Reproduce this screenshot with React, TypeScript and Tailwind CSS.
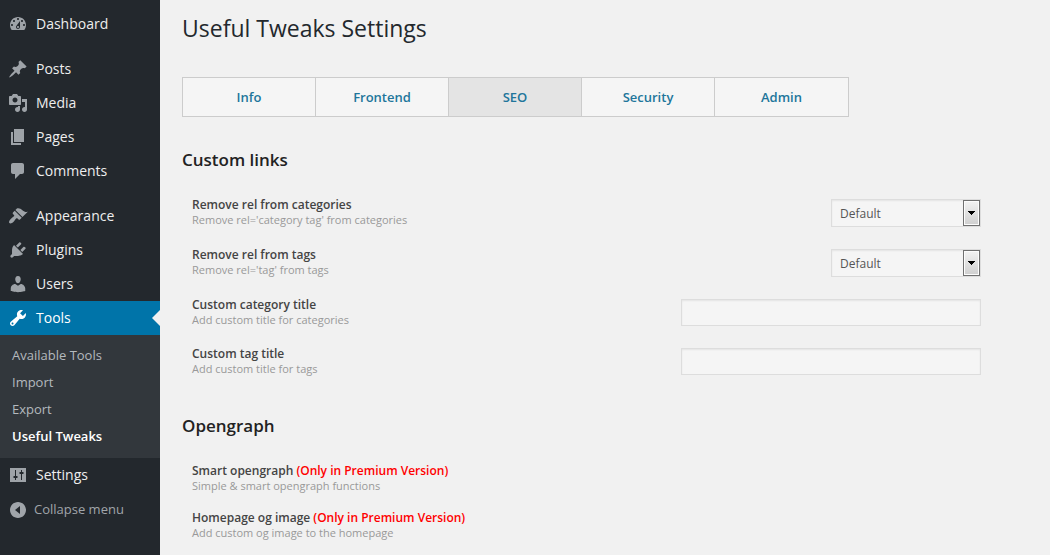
import { useState } from "react";

const ICONS = {
  dashboard:
    "M3.76 16h12.48c1.1-1.37 1.76-3.11 1.76-5 0-4.42-3.58-8-8-8s-8 3.58-8 8c0 1.89.66 3.63 1.76 5zM10 4c.55 0 1 .45 1 1s-.45 1-1 1-1-.45-1-1 .45-1 1-1zM6 6c.55 0 1 .45 1 1s-.45 1-1 1-1-.45-1-1 .45-1 1-1zm8 0c.55 0 1 .45 1 1s-.45 1-1 1-1-.45-1-1 .45-1 1-1zm-5.37 5.55L12 7v6c0 1.1-.9 2-2 2s-2-.9-2-2c0-.57.24-1.08.63-1.45zM4 10c.55 0 1 .45 1 1s-.45 1-1 1-1-.45-1-1 .45-1 1-1zm12 0c.55 0 1 .45 1 1s-.45 1-1 1-1-.45-1-1 .45-1 1-1zm-5 3c0-.55-.45-1-1-1s-1 .45-1 1 .45 1 1 1 1-.45 1-1z",
  posts:
    "M10.44 3.02l1.82-1.82 6.36 6.35-1.83 1.82c-1.05-.68-2.48-.57-3.41.36l-.75.75c-.92.93-1.04 2.35-.35 3.41l-1.83 1.82-2.41-2.41-2.8 2.79c-.42.42-3.38 2.71-3.8 2.29s1.86-3.39 2.28-3.81l2.79-2.79L4.1 9.36l1.83-1.82c1.05.69 2.48.57 3.4-.36l.75-.75c.93-.92 1.05-2.35.36-3.41z",
  media:
    "M13 11V4c0-.55-.45-1-1-1h-1.67L9 1H5L3.67 3H2c-.55 0-1 .45-1 1v7c0 .55.45 1 1 1h10c.55 0 1-.45 1-1zM7 4.5c1.38 0 2.5 1.12 2.5 2.5S8.38 9.5 7 9.5 4.5 8.38 4.5 7 5.62 4.5 7 4.5zM14 6h5v10.5c0 1.38-1.12 2.5-2.5 2.5S14 17.88 14 16.5s1.12-2.5 2.5-2.5c.17 0 .34.02.5.05V9h-3V6zm-4 8.05V13h2v3.5c0 1.38-1.12 2.5-2.5 2.5S7 17.88 7 16.5 8.12 14 9.5 14c.17 0 .34.02.5.05z",
  pages: "M6 15V2h10v13H6zm-1 1h8v2H3V5h2v11z",
  comments:
    "M5 2h9c1.1 0 2 .9 2 2v7c0 1.1-.9 2-2 2h-2l-5 5v-5H5c-1.1 0-2-.9-2-2V4c0-1.1.9-2 2-2z",
  appearance:
    "M14.48 11.06L7.41 3.99l1.5-1.5c.5-.56 2.3-.47 3.51.32 1.21.8 1.43 1.28 2.91 2.1 1.18.64 2.45 1.26 4.45.85zm-.71.71L6.7 4.7 4.93 6.47c-.39.39-.39 1.02 0 1.41l1.06 1.06c.39.39.39 1.03 0 1.42-.6.6-1.43 1.11-2.21 1.69-.35.26-.7.53-1.01.84C1.43 14.23.4 16.08 1.4 17.07c.99 1 2.84-.03 4.18-1.36.31-.31.58-.66.85-1.02.57-.78 1.08-1.61 1.69-2.21.39-.39 1.02-.39 1.41 0l1.06 1.06c.39.39 1.02.39 1.41 0z",
  plugins:
    "M13.11 4.36L9.87 7.6 8 5.73l3.24-3.24c.35-.34 1.05-.2 1.56.32.52.51.66 1.21.31 1.55zm-8 1.77l.91-1.12 9.01 9.01-1.19.84c-.71.71-2.63 1.16-3.82 1.16H6.14L4.9 17.26c-.59.59-1.54.59-2.12 0-.59-.58-.59-1.53 0-2.12l1.24-1.24v-3.88c0-1.13.4-3.19 1.09-3.89zm7.26 3.97l3.24-3.24c.34-.35 1.04-.21 1.55.31.52.51.66 1.21.31 1.55l-3.24 3.25z",
  users:
    "M10 9.25c-2.27 0-2.73-3.44-2.73-3.44C7 4.02 7.82 2 9.97 2c2.16 0 2.98 2.02 2.71 3.81 0 0-.41 3.44-2.68 3.44zm0 2.57L12.72 10c2.39 0 4.52 2.33 4.52 4.53v2.49s-3.65 1.13-7.24 1.13c-3.65 0-7.24-1.13-7.24-1.13v-2.49c0-2.25 1.94-4.48 4.47-4.48z",
  tools:
    "M16.68 9.77c-1.34 1.34-3.3 1.67-4.95.99l-5.41 6.52c-.99.99-2.59.99-3.58 0s-.99-2.59 0-3.57l6.52-5.42c-.68-1.65-.35-3.61.99-4.95 1.28-1.28 3.12-1.62 4.72-1.06l-2.89 2.89 2.82 2.82 2.86-2.87c.53 1.58.18 3.39-1.08 4.65zM3.81 16.21c.4.39 1.04.39 1.43 0 .4-.4.4-1.04 0-1.43-.39-.4-1.03-.4-1.43 0-.39.39-.39 1.03 0 1.43z",
  settings:
    "M18 17V3H2v14h16zM8 11h1.5v2H8v2H7v-2H5.5v-2H7V5h1v6zm5-2h-1.5V7H13V5h1v2h1.5v2H14v6h-1V9z",
  collapse:
    "M10 2c4.42 0 8 3.58 8 8s-3.58 8-8 8-8-3.58-8-8 3.58-8 8-8zm2 12V6l-5 4z",
};

type IconName = keyof typeof ICONS;

function Icon({ name }: { name: IconName }) {
  return (
    <svg viewBox="0 0 20 20" className="size-5 shrink-0 fill-current" fillRule="evenodd" aria-hidden="true">
      <path d={ICONS[name]} />
    </svg>
  );
}

function MenuItem({ icon, label, active = false }: { icon: IconName; label: string; active?: boolean }) {
  return (
    <a
      href="#"
      className={
        active
          ? "relative flex h-[34px] items-center gap-2 bg-[#0074a9] px-2 text-sm text-white"
          : "flex h-[34px] items-center gap-2 px-2 text-sm text-[#eeeeee]"
      }
    >
      <span className={active ? "text-white" : "text-[#9ea3a8]"}>
        <Icon name={icon} />
      </span>
      {label}
      {active && (
        <span className="absolute top-[9px] right-0 border-8 border-l-0 border-transparent border-r-[#f1f1f1]" />
      )}
    </a>
  );
}

const SUBMENU = ["Available Tools", "Import", "Export", "Useful Tweaks"];

function Sidebar() {
  return (
    <nav className="w-40 shrink-0 bg-[#23282d] pt-[7px]">
      <MenuItem icon="dashboard" label="Dashboard" />
      <div className="mt-[11px]">
        <MenuItem icon="posts" label="Posts" />
        <MenuItem icon="media" label="Media" />
        <MenuItem icon="pages" label="Pages" />
        <MenuItem icon="comments" label="Comments" />
      </div>
      <div className="mt-[11px]">
        <MenuItem icon="appearance" label="Appearance" />
        <MenuItem icon="plugins" label="Plugins" />
        <MenuItem icon="users" label="Users" />
        <MenuItem icon="tools" label="Tools" active />
        <ul className="bg-[#32373c] pt-[7px] pb-2 text-[13px] leading-[27px] text-[#b4b9be]">
          {SUBMENU.map((item) => (
            <li key={item}>
              <a
                href="#"
                className={item === "Useful Tweaks" ? "block px-3 font-semibold text-white" : "block px-3"}
              >
                {item}
              </a>
            </li>
          ))}
        </ul>
        <MenuItem icon="settings" label="Settings" />
      </div>
      <button type="button" className="flex h-9 w-full items-center gap-[6px] px-2 text-[13px] text-[#a0a5aa]">
        <Icon name="collapse" />
        Collapse menu
      </button>
    </nav>
  );
}

const TABS = ["Info", "Frontend", "SEO", "Security", "Admin"];

function Tabs() {
  const [current, setCurrent] = useState("SEO");
  return (
    <div className="mt-8 grid h-10 max-w-[667px] grid-cols-5 divide-x divide-[#cccccc] border border-[#cccccc]">
      {TABS.map((tab) => (
        <button
          key={tab}
          type="button"
          onClick={() => setCurrent(tab)}
          className={
            tab === current
              ? "bg-[#e4e4e4] pt-0.5 text-[13px] font-semibold text-[#21759b]"
              : "bg-[#f5f5f5] pt-0.5 text-[13px] font-semibold text-[#21759b]"
          }
        >
          {tab}
        </button>
      ))}
    </div>
  );
}

interface Field {
  id: string;
  title: string;
  description: string;
  kind: "select" | "text" | "premium";
}

const CUSTOM_LINKS: Field[] = [
  { id: "rel-categories", title: "Remove rel from categories", description: "Remove rel='category tag' from categories", kind: "select" },
  { id: "rel-tags", title: "Remove rel from tags", description: "Remove rel='tag' from tags", kind: "select" },
  { id: "category-title", title: "Custom category title", description: "Add custom title for categories", kind: "text" },
  { id: "tag-title", title: "Custom tag title", description: "Add custom title for tags", kind: "text" },
];

const OPENGRAPH: Field[] = [
  { id: "smart-opengraph", title: "Smart opengraph", description: "Simple & smart opengraph functions", kind: "premium" },
  { id: "homepage-image", title: "Homepage og image", description: "Add custom og image to the homepage", kind: "premium" },
];

function SelectBox({ id }: { id: string }) {
  return (
    <div className="relative my-px h-7 w-[150px] shrink-0">
      <select
        id={id}
        className="size-full appearance-none border border-[#dddddd] bg-[#f5f5f5] pt-0.5 pr-5 pl-2 text-xs text-[#555555] shadow-[inset_0_1px_2px_rgba(0,0,0,0.07)]"
      >
        <option>Default</option>
        <option>Enable</option>
      </select>
      <span className="pointer-events-none absolute inset-y-px right-px flex w-[17px] items-center justify-center border border-[#707070] bg-linear-to-b from-[#f3f3f3] to-[#cfcfcf] shadow-[inset_0_0_0_1px_#fcfcfc]">
        <svg viewBox="0 0 7 4" className="h-1 w-[7px]" shapeRendering="crispEdges" aria-hidden="true">
          <path d="M0 0h7v1H6v1H5v1H4v1H3V3H2V2H1V1H0z" />
        </svg>
      </span>
    </div>
  );
}

function FieldRow({ field }: { field: Field }) {
  const { id, title, description, kind } = field;
  const text = (
    <>
      <span className="block text-xs leading-[13px] font-semibold text-[#444444]">
        {title}
        {kind === "premium" && <span className="text-[#ff0000]"> (Only in Premium Version)</span>}
      </span>
      <span className="mt-0.5 block text-[11px] leading-[14px] text-[#999999]">{description}</span>
    </>
  );
  return (
    <div className="flex items-start justify-between gap-4 px-[10px]">
      {kind === "premium" ? <div>{text}</div> : <label htmlFor={id}>{text}</label>}
      {kind === "select" && <SelectBox id={id} />}
      {kind === "text" && (
        <input
          id={id}
          type="text"
          className="my-px h-[27px] w-[300px] border border-[#dddddd] bg-[#f5f5f5] px-2 text-xs text-[#555555] shadow-[inset_0_1px_2px_rgba(0,0,0,0.07)]"
        />
      )}
    </div>
  );
}

export default function App() {
  return (
    <div className="flex min-h-screen bg-[#f1f1f1] font-['Open_Sans',sans-serif]">
      <Sidebar />
      <main className="min-w-0 flex-1 px-[22px] pt-3">
        <h1 className="text-[23px] leading-[33px] text-[#23282d]">Useful Tweaks Settings</h1>
        <Tabs />
        <div className="max-w-[809px]">
          <section className="mt-8">
            <h2 className="text-[17px] leading-[22px] font-semibold text-[#222222]">Custom links</h2>
            <div className="mt-[27px] flex flex-col gap-5">
              {CUSTOM_LINKS.map((field) => (
                <FieldRow key={field.id} field={field} />
              ))}
            </div>
          </section>
          <section className="mt-[39px]">
            <h2 className="text-[17px] leading-[22px] font-semibold text-[#222222]">Opengraph</h2>
            <div className="mt-[27px] flex flex-col gap-[18px]">
              {OPENGRAPH.map((field) => (
                <FieldRow key={field.id} field={field} />
              ))}
            </div>
          </section>
        </div>
      </main>
    </div>
  );
}
